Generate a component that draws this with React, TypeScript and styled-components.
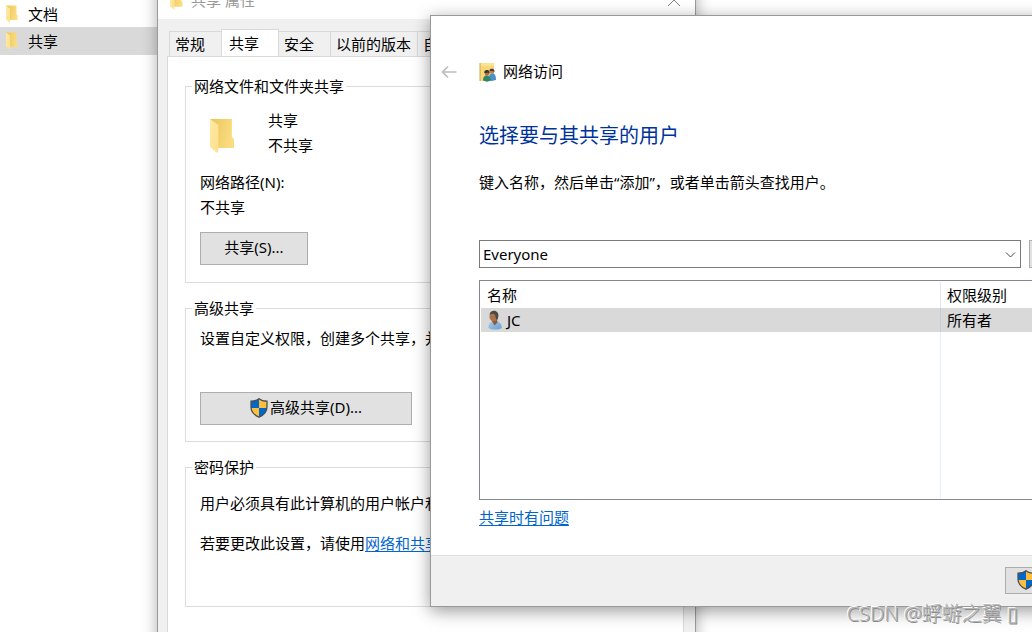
import React from "react";
import styled, { createGlobalStyle } from "styled-components";

const GlobalStyle = createGlobalStyle`
  *, *::before, *::after { box-sizing: border-box; }
  body {
    margin: 0;
    background: #fff;
    color: #000;
    font-family: "Noto Sans", "Noto Sans CJK SC", sans-serif;
    font-size: 15px;
    line-height: 25px;
  }
  button, select { font: inherit; color: inherit; }
  h1, h2, p, ul { margin: 0; padding: 0; font-weight: 400; }
`;

const Desktop = styled.main`
  position: relative;
  height: 100vh;
  overflow: hidden;
  background: #fff;
`;

const Tree = styled.ul`
  width: 158px;
  list-style: none;
`;

const TreeRow = styled.li<{ $selected?: boolean }>`
  display: flex;
  align-items: center;
  gap: 10px;
  height: 28px;
  padding-left: 6px;
  background: ${(p) => (p.$selected ? "#d9d9d9" : "transparent")};
  & + & { margin-top: -1px; }
`;

const PropertiesWindow = styled.section`
  position: absolute;
  top: -20px;
  bottom: -60px;
  left: 157px;
  width: 539px;
  display: flex;
  flex-direction: column;
  border: 1px solid #9b9b9b;
  background: #f0f0f0;
  box-shadow: 0 4px 14px rgba(0, 0, 0, 0.32);
`;

const TitleBar = styled.header`
  display: flex;
  align-items: center;
  gap: 8px;
  height: 38px;
  padding: 0 14px 0 12px;
  background: #fff;
  color: #999;
`;

const TitleText = styled.h2`
  flex: 1;
  font-size: 15px;
`;

const CloseButton = styled.button`
  display: flex;
  padding: 0;
  border: 0;
  background: none;
`;

const Tabs = styled.div`
  display: flex;
  align-items: flex-end;
  height: 37px;
  padding-left: 11px;
`;

const Tab = styled.button<{ $width: number; $active?: boolean; $joined?: boolean }>`
  flex: none;
  width: ${(p) => p.$width}px;
  height: ${(p) => (p.$active ? 28 : 25)}px;
  margin-bottom: ${(p) => (p.$active ? -1 : 0)}px;
  padding: 0 0 ${(p) => (p.$active ? 2 : 0)}px ${(p) => (p.$active ? 7 : 5)}px;
  border: 1px solid #d9d9d9;
  border-bottom: 0;
  border-right-width: ${(p) => (p.$active ? 1 : 0)}px;
  border-left-width: ${(p) => (p.$joined ? 0 : 1)}px;
  background: ${(p) => (p.$active ? "#fff" : "#f0f0f0")};
  line-height: 24px;
  text-align: left;
  white-space: nowrap;
`;

const TabPanel = styled.div`
  flex: 1;
  display: flex;
  flex-direction: column;
  gap: 15px;
  margin: 0 11px 0 9px;
  padding: 19px 14px 0 17px;
  border: 1px solid #d9d9d9;
  background: #fff;
`;

const Group = styled.fieldset<{ $top: number; $bottom: number }>`
  min-width: 0;
  margin: 0;
  padding: ${(p) => p.$top}px 14px ${(p) => p.$bottom}px;
  border: 1px solid #dcdcdc;
  overflow: hidden;
  white-space: nowrap;
`;

const Legend = styled.legend`
  margin-left: -8px;
  padding: 0 2px;
  line-height: 20px;
`;

const Stack = styled.div<{ $gap: number }>`
  display: flex;
  flex-direction: column;
  align-items: flex-start;
  gap: ${(p) => p.$gap}px;
`;

const ShareSummary = styled.div`
  display: flex;
  align-items: center;
  gap: 33px;
  padding-left: 10px;
  svg { margin-top: 6px; }
`;

const Button = styled.button<{ $width: number; $height?: number }>`
  display: flex;
  align-items: center;
  justify-content: center;
  gap: 2px;
  width: ${(p) => p.$width}px;
  height: ${(p) => p.$height ?? 33}px;
  padding: 0 0 2px;
  border: 1px solid #adadad;
  background: #e1e1e1;
  white-space: nowrap;
`;

const Link = styled.a`
  display: inline-block;
  color: #0066cc;
  text-decoration: underline;
  text-underline-offset: 2px;
`;

const Wizard = styled.section`
  position: absolute;
  top: 15px;
  left: 430px;
  right: -154px;
  border: 1px solid #999;
  background: #fff;
  box-shadow: 0 4px 16px rgba(0, 0, 0, 0.4);
`;

const WizardHeader = styled.header`
  display: flex;
  align-items: center;
  height: 25px;
  margin-top: 43px;
  padding-left: 10px;
`;

const BackButton = styled.button`
  display: flex;
  margin-right: 22px;
  padding: 0;
  border: 0;
  background: none;
`;

const WizardName = styled.span`
  margin-left: 6px;
`;

const WizardBody = styled.div`
  padding: 38px 48px 25px;
`;

const Heading = styled.h1`
  margin-bottom: 20px;
  color: #003399;
  font-size: 20px;
  line-height: 28px;
`;

const AddRow = styled.div`
  display: flex;
  gap: 8px;
  margin: 45px 0 12px;
`;

const Combo = styled.div`
  position: relative;
  flex: 1;
  display: flex;
`;

const Select = styled.select`
  appearance: none;
  width: 100%;
  height: 28px;
  padding: 0 24px 0 3px;
  border: 1px solid #7a7a7a;
  border-radius: 0;
  background: #fff;
`;

const ComboArrow = styled.svg`
  position: absolute;
  top: 11px;
  right: 5px;
  pointer-events: none;
`;

const ListFrame = styled.div`
  height: 220px;
  margin-bottom: 5px;
  padding: 1px;
  border: 1px solid #828790;
`;

const UserTable = styled.table`
  width: 100%;
  height: 100%;
  border-collapse: separate;
  border-spacing: 0;
  table-layout: fixed;
`;

const HeadCell = styled.th<{ $first?: boolean }>`
  width: ${(p) => (p.$first ? "460px" : "auto")};
  height: 26px;
  padding: 0 6px;
  border-right: 1px solid #e3e8ee;
  font-weight: 400;
  text-align: left;
`;

const Cell = styled.td<{ $selected?: boolean }>`
  height: ${(p) => (p.$selected ? "24px" : "auto")};
  padding: 0 6px;
  border-right: 1px solid ${(p) => (p.$selected ? "#c3cddb" : "#e5effb")};
  background: ${(p) => (p.$selected ? "#d9d9d9" : "#fff")};
  line-height: 24px;
`;

const UserName = styled.span`
  display: flex;
  align-items: center;
  gap: 4px;
`;

const WizardFooter = styled.footer`
  display: flex;
  justify-content: flex-end;
  gap: 8px;
  padding: 11px 12px 12px;
  border-top: 1px solid #dfdfdf;
  background: #f0f0f0;
`;

const Watermark = styled.div`
  position: absolute;
  right: 14px;
  bottom: 4px;
  color: #b4b4b4;
  font-size: 20px;
  line-height: 28px;
  font-weight: 300;
  text-shadow: 1px 1px 0 #8a8a8a, -1px -1px 0 #fff;
`;

const Folder = ({ width, height }: { width: number; height: number }) => (
  <svg width={width} height={height} viewBox="0 0 24 36" preserveAspectRatio="none" aria-hidden="true">
    <defs>
      <linearGradient id="folderBack" x1="0" x2="1" y1="0" y2="0.3">
        <stop offset="0" stopColor="#eac45c" />
        <stop offset="1" stopColor="#fbdc80" />
      </linearGradient>
      <linearGradient id="folderFlap" x1="0" x2="1" y1="0" y2="1">
        <stop offset="0" stopColor="#ffe9a6" />
        <stop offset="1" stopColor="#fde08a" />
      </linearGradient>
    </defs>
    <path d="M0 1H21V19L23 21V30H6L0 26Z" fill="url(#folderBack)" />
    <path d="M0 1L8 7V33L7 35L0 29Z" fill="url(#folderFlap)" />
  </svg>
);

const Shield = () => (
  <svg width="18" height="20" viewBox="0 0 18 20" aria-hidden="true">
    <path d="M9 0.8C7 2.500 4 3.200 1 3.200V9C1 13.500 4 17 9 19.200C14 17 17 13.500 17 9V3.200C14 3.200 11 2.500 9 0.800Z" fill="#ffbe3c" />
    <path d="M9 0.800C7 2.500 4 3.200 1 3.200V10H9Z" fill="#0068c8" />
    <path d="M9 10H17C16.500 14.200 13.500 17.200 9 19.200Z" fill="#0068c8" />
    <path d="M9 0.800C7 2.500 4 3.200 1 3.200V9C1 13.500 4 17 9 19.200C14 17 17 13.500 17 9V3.200C14 3.200 11 2.500 9 0.800Z" fill="none" stroke="#4a4f57" strokeWidth="1.300" />
  </svg>
);

const SharedFolderIcon = () => (
  <svg width="18" height="20" viewBox="0 0 18 20" aria-hidden="true">
    <path d="M1 1H15V19H1Z" fill="#f8d775" />
    <path d="M1 1H15V4H1Z" fill="#fbe396" />
    <path d="M1 1V19" stroke="#c9a94e" />
    <path d="M10 16C10 12.500 11.500 11.500 13.500 11.500S17 13 17 18L12 19Z" fill="#4a90cc" />
    <circle cx="13" cy="9.500" r="2.200" fill="#b98560" />
    <path d="M10.500 9C10.500 7 12 6.500 13.500 6.800S15.800 8.500 15.300 10C14.500 8.500 12 9 10.500 9Z" fill="#4a3a30" />
    <path d="M4 18.500C4 15 5.500 13.500 7.500 13.500S12 15 12 18.500L8 19.800Z" fill="#2f8568" />
    <circle cx="8" cy="11.500" r="2.200" fill="#a8714d" />
    <path d="M5.300 11C5 8.500 6.500 7.800 8.200 8S11 9.500 10.500 11.500C9.500 10 7 11 5.300 11Z" fill="#3a322c" />
  </svg>
);

const UserIcon = () => (
  <svg width="16" height="20" viewBox="0 0 16 20" aria-hidden="true">
    <defs>
      <linearGradient id="shirt" x1="0" x2="1" y1="0" y2="1">
        <stop offset="0" stopColor="#a9cdea" />
        <stop offset="1" stopColor="#6b9fd2" />
      </linearGradient>
    </defs>
    <path d="M1.500 18C1.200 13.500 3.500 11.300 7 11S14.800 12.500 14.800 18C12 20 4.500 20 1.500 18Z" fill="url(#shirt)" />
    <path d="M4.500 10.500L10 9.500L10.500 12.500L7.500 15.500Z" fill="#8a5c3c" />
    <ellipse cx="6.500" cy="6.500" rx="4" ry="5" fill="#a87349" />
    <path d="M2.600 4.500C3 1 6.500 0 9 1.200C12 2.500 12 7 10.200 10C8.500 10 9 6 7.500 4.300C6 3.300 4 4 2.600 4.500Z" fill="#4d4843" />
  </svg>
);

export default function App() {
  return (
    <>
      <GlobalStyle />
      <Desktop>
        <Tree>
          <TreeRow><Folder width={12} height={18} />文档</TreeRow>
          <TreeRow $selected><Folder width={12} height={18} />共享</TreeRow>
        </Tree>

        <PropertiesWindow aria-label="共享 属性">
          <TitleBar>
            <Folder width={13} height={19} />
            <TitleText>共享 属性</TitleText>
            <CloseButton aria-label="关闭">
              <svg width="14" height="14" viewBox="0 0 14 14" aria-hidden="true">
                <path d="M1 1L13 13M13 1L1 13" stroke="#808080" fill="none" />
              </svg>
            </CloseButton>
          </TitleBar>
          <Tabs role="tablist">
            <Tab role="tab" $width={52}>常规</Tab>
            <Tab role="tab" $width={58} aria-selected="true" $active>共享</Tab>
            <Tab role="tab" $width={51} $joined>安全</Tab>
            <Tab role="tab" $width={87}>以前的版本</Tab>
            <Tab role="tab" $width={60}>自定义</Tab>
          </Tabs>
          <TabPanel role="tabpanel">
            <Group $top={12} $bottom={17}>
              <Legend>网络文件和文件夹共享</Legend>
              <Stack $gap={12}>
                <ShareSummary>
                  <Folder width={25} height={36} />
                  <div>
                    <p>共享</p>
                    <p>不共享</p>
                  </div>
                </ShareSummary>
                <div>
                  <p>网络路径(N):</p>
                  <p>不共享</p>
                </div>
                <Button $width={108}>共享(S)...</Button>
              </Stack>
            </Group>
            <Group $top={8} $bottom={16}>
              <Legend>高级共享</Legend>
              <Stack $gap={41}>
                <p>设置自定义权限，创建多个共享，并设置其他高级共享选项。</p>
                <Button $width={212}><Shield />高级共享(D)...</Button>
              </Stack>
            </Group>
            <Group $top={14} $bottom={50}>
              <Legend>密码保护</Legend>
              <Stack $gap={15}>
                <p>用户必须具有此计算机的用户帐户和密码，才能访问共享文件夹。</p>
                <p>若要更改此设置，请使用<Link href="#network-center">网络和共享中心</Link>。</p>
              </Stack>
            </Group>
          </TabPanel>
        </PropertiesWindow>

        <Wizard aria-label="网络访问">
          <WizardHeader>
            <BackButton aria-label="返回">
              <svg width="16" height="14" viewBox="0 0 16 14" aria-hidden="true">
                <path d="M15.500 7H1.500M7 1.500L1.500 7L7 12.500" fill="none" stroke="#bdbdbd" strokeWidth="1.700" />
              </svg>
            </BackButton>
            <SharedFolderIcon />
            <WizardName>网络访问</WizardName>
          </WizardHeader>
          <WizardBody>
            <Heading>选择要与其共享的用户</Heading>
            <p>键入名称，然后单击“添加”，或者单击箭头查找用户。</p>
            <AddRow>
              <Combo>
                <Select aria-label="用户" defaultValue="Everyone">
                  <option>Everyone</option>
                </Select>
                <ComboArrow width="11" height="8" viewBox="0 0 11 8" aria-hidden="true">
                  <path d="M1 1.500L5.500 6L10 1.500" fill="none" stroke="#444" />
                </ComboArrow>
              </Combo>
              <Button $width={108} $height={28}>添加(A)</Button>
            </AddRow>
            <ListFrame>
              <UserTable>
                <thead>
                  <tr>
                    <HeadCell $first>名称</HeadCell>
                    <HeadCell>权限级别</HeadCell>
                  </tr>
                </thead>
                <tbody>
                  <tr>
                    <Cell $selected><UserName><UserIcon />JC</UserName></Cell>
                    <Cell $selected>所有者</Cell>
                  </tr>
                  <tr>
                    <Cell />
                    <Cell />
                  </tr>
                </tbody>
              </UserTable>
            </ListFrame>
            <p><Link href="#sharing-help">共享时有问题</Link></p>
          </WizardBody>
          <WizardFooter>
            <Button $width={94} $height={27}><Shield />共享(H)</Button>
            <Button $width={66} $height={27}>取消</Button>
          </WizardFooter>
        </Wizard>

        <Watermark>CSDN @蜉蝣之翼 ▯</Watermark>
      </Desktop>
    </>
  );
}
